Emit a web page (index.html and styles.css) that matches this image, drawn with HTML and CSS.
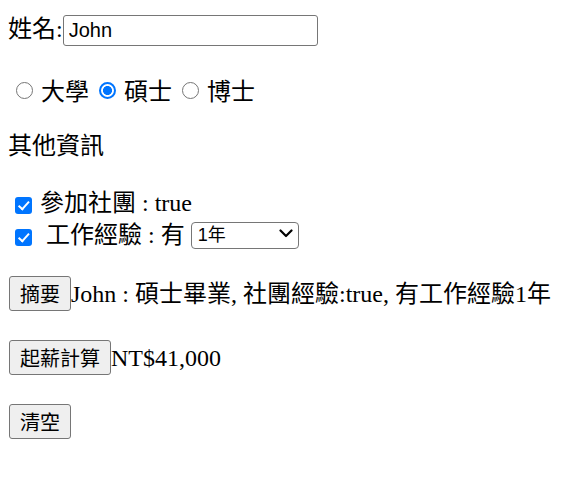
FILE: index.html
```html
<!DOCTYPE html>
<html lang="zh-Hant">
<head>
<meta charset="utf-8">
<title>表單</title>
<link rel="stylesheet" href="styles.css">
</head>
<body>
<div class="name-row">姓名:<input class="name-input" type="text" value="John"></div>
<p class="degrees"><label class="opt"><input class="native" type="radio" name="degree"><span class="radio-mark"></span> 大學</label> <label class="opt"><input class="native" type="radio" name="degree" checked><span class="radio-mark"></span> 碩士</label> <label class="opt"><input class="native" type="radio" name="degree"><span class="radio-mark"></span> 博士</label></p>
<p class="title">其他資訊</p>
<p class="extras"><label class="opt"><input class="native" type="checkbox" checked><span class="check-mark"></span> 參加社團</label> : true<br><label class="opt"><input class="native" type="checkbox" checked><span class="check-mark"></span>&nbsp; 工作經驗</label> : 有 <span class="select-wrap"><select class="years"><option>1年</option><option>2年</option><option>3年</option></select><svg class="chevron" width="14" height="9" viewBox="0 0 14 9" aria-hidden="true"><path d="M1.5 1.5 L7 7 L12.5 1.5" fill="none" stroke="#000" stroke-width="2.2" stroke-linecap="round" stroke-linejoin="round"/></svg></span></p>
<p class="action first-action"><button class="btn" type="button">摘要</button>John : 碩士畢業, 社團經驗:true, 有工作經驗1年</p>
<p class="action"><button class="btn" type="button">起薪計算</button>NT$41,000</p>
<p class="action"><button class="btn" type="button">清空</button></p>
</body>
</html>
```
FILE: styles.css
```css
html { background: #ffffff; }
body {
  margin: 8px;
  color: #000000;
  font-family: "Liberation Serif", "Noto Sans CJK TC", serif;
  font-size: 24px;
  line-height: 32px;
}
p { margin: 24px 0; }
.name-row {
  margin: 0;
  padding: 5px 0 6px;
}
.name-input {
  box-sizing: border-box;
  width: 255px;
  height: 31px;
  margin: 0;
  padding: 0 5px;
  border: 1px solid #767676;
  border-radius: 3px;
  font-family: "Liberation Sans", "Noto Sans CJK TC", sans-serif;
  font-size: 20px;
  line-height: normal;
  color: #000;
  background: #fff;
}
.degrees {
  margin-bottom: 22px;
  padding-left: 4px;
}
.title { margin: 22px 0 0; }
.opt { position: relative; }
.native {
  position: absolute;
  left: 0;
  top: 0;
  width: 1px;
  height: 1px;
  margin: 0;
  opacity: 0;
  pointer-events: none;
}
.radio-mark {
  display: inline-block;
  box-sizing: border-box;
  width: 17px;
  height: 17px;
  margin: 0 2px 0 4px;
  border: 1.5px solid #767676;
  border-radius: 50%;
  background: #fff;
  vertical-align: 1.5px;
}
.native:checked + .radio-mark {
  border: 2px solid #0075ff;
  background: radial-gradient(circle, #0075ff 0 4.2px, #ffffff 4.8px);
}
.check-mark {
  position: relative;
  display: inline-block;
  box-sizing: border-box;
  width: 17px;
  height: 17px;
  margin: 0 2px 0 7px;
  border-radius: 3px;
  background: #0075ff;
  vertical-align: -3px;
}
.check-mark::after {
  content: "";
  position: absolute;
  left: 5.5px;
  top: 2px;
  width: 4px;
  height: 8.5px;
  border: solid #ffffff;
  border-width: 0 2.5px 2.5px 0;
  transform: rotate(42deg);
}
.select-wrap {
  position: relative;
  display: inline-block;
}
.years {
  appearance: none;
  -webkit-appearance: none;
  box-sizing: border-box;
  width: 108px;
  height: 27px;
  margin: 0;
  padding: 0 6px;
  border: 1px solid #767676;
  border-radius: 4px;
  font-family: "Liberation Sans", "Noto Sans CJK TC", sans-serif;
  font-size: 18px;
  line-height: 25px;
  color: #000;
  background: #fff;
  vertical-align: 2px;
}
.chevron {
  position: absolute;
  right: 6px;
  top: 10px;
  pointer-events: none;
}
.extras { margin: 25px 0 0; }
.action { margin: 29px 0; }
.first-action { margin-top: 25px; }
.btn {
  box-sizing: border-box;
  height: 35px;
  margin: 0 0 0 1px;
  padding: 0 10px;
  border: 1px solid #767676;
  border-radius: 3px;
  background: #efefef;
  color: #000;
  font-family: "Noto Sans CJK TC", sans-serif;
  font-size: 20px;
  line-height: normal;
}
```
